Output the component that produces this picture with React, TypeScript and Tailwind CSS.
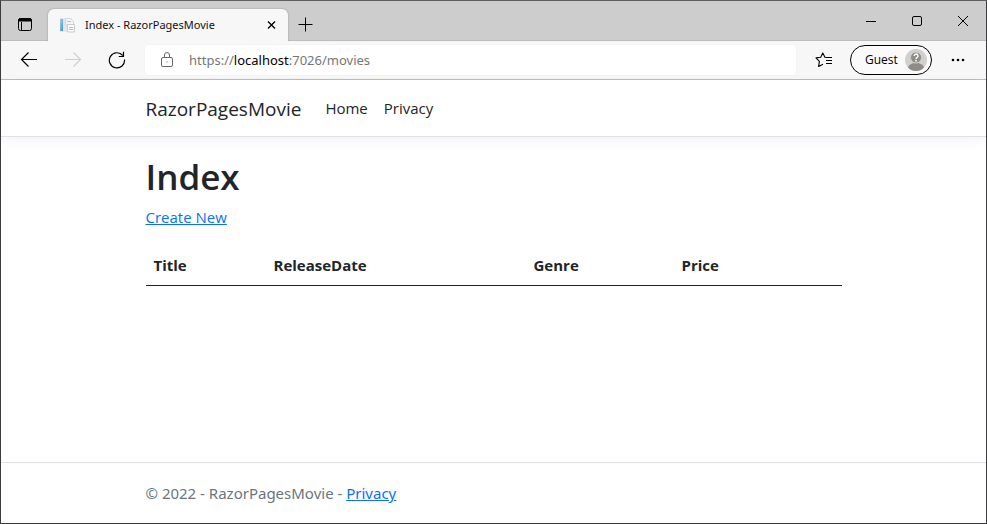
import type { ReactNode } from 'react';

function IconButton({ label, className = '', children }: { label: string; className?: string; children: ReactNode }) {
  return (
    <button type="button" aria-label={label} className={`flex shrink-0 items-center justify-center ${className}`}>
      {children}
    </button>
  );
}

function TabBar() {
  return (
    <div className="flex h-10 items-end border-b border-[#bcbcbc] bg-[#cdcdcd]">
      <IconButton label="Tab actions" className="h-8 w-[47px] text-black">
        <svg width="15" height="15" viewBox="0 0 15 15" fill="none" stroke="currentColor">
          <rect x="1.5" y="1.5" width="13" height="12" rx="2" />
          <path d="M1.5 4V3.500a2 2 0 0 1 2-2h9a2 2 0 0 1 2 2V4z" fill="currentColor" />
          <path d="M4.500 5v8.500" />
        </svg>
      </IconButton>
      <div className="-mb-px flex h-8 w-60 items-center rounded-t-md bg-[#f7f7f7] px-2 shadow-[0_0_2px_rgba(0,0,0,0.3)] [clip-path:inset(-4px_-4px_0_-4px)]">
        <svg width="20" height="16" viewBox="0 0 20 16" className="shrink-0">
          <defs>
            <linearGradient id="spine" x1="0" y1="0" x2="1" y2="1">
              <stop offset="0" stopColor="#a5d3f0" />
              <stop offset="1" stopColor="#4292c8" />
            </linearGradient>
          </defs>
          <path d="M4 1h12v14H4z" fill="#e3e5e8" />
          <path d="M4 2h3v12H4z" fill="url(#spine)" />
          <path d="M9.500 1.500h5l3 3V8h-8z" fill="#f4f5f6" stroke="#d3d6da" />
          <path d="M11.500 7.500h7V15h-7z" fill="#fafafa" stroke="#c9cdd2" />
          <path d="M11 4.500h4M13 10.500h4M13 12.500h4" stroke="#b8bfc9" />
        </svg>
        <span className="ml-[9px] flex-1 truncate font-['Noto_Sans',sans-serif] text-[11px] leading-4 text-[#111]">
          Index - RazorPagesMovie
        </span>
        <IconButton label="Close tab" className="size-4 text-black">
          <svg width="10" height="10" viewBox="0 0 10 10" fill="none" stroke="currentColor" strokeWidth="1.3">
            <path d="M1 1.500l7 7M8 1.500l-7 7" />
          </svg>
        </IconButton>
      </div>
      <IconButton label="New tab" className="h-8 w-[35px] text-black">
        <svg width="15" height="15" viewBox="0 0 15 15" fill="none" stroke="currentColor">
          <path d="M7.500 0.500v14M0.500 7.500h14" />
        </svg>
      </IconButton>
      <div className="ml-auto flex h-full items-center text-black">
        <IconButton label="Minimize" className="h-full w-[46px]">
          <svg width="10" height="10" viewBox="0 0 10 10" fill="none" stroke="currentColor">
            <path d="M0 5.500h10" />
          </svg>
        </IconButton>
        <IconButton label="Maximize" className="h-full w-[46px]">
          <svg width="10" height="10" viewBox="0 0 10 10" fill="none" stroke="currentColor">
            <rect x="0.500" y="0.500" width="9" height="9" rx="1.500" />
          </svg>
        </IconButton>
        <IconButton label="Close window" className="h-full w-[46px]">
          <svg width="10" height="10" viewBox="0 0 10 10" fill="none" stroke="currentColor">
            <path d="M0 0l10 10M10 0L0 10" />
          </svg>
        </IconButton>
      </div>
    </div>
  );
}

function Toolbar() {
  return (
    <div className="flex h-[39px] items-center border-b border-[#bdbdbd] bg-[#f7f7f7] px-1.5 text-black">
      <IconButton label="Back" className="h-8 w-11">
        <svg width="18" height="16" viewBox="0 0 18 16" fill="none" stroke="currentColor" strokeWidth="1.2">
          <path d="M17 7.500H1.500M8.500 0.500L1.500 7.500l7 7" />
        </svg>
      </IconButton>
      <IconButton label="Forward" className="h-8 w-11 text-[#cfcfcf]">
        <svg width="18" height="16" viewBox="0 0 18 16" fill="none" stroke="currentColor" strokeWidth="1.2">
          <path d="M1 7.500h15.500M9.500 0.500l7 7-7 7" />
        </svg>
      </IconButton>
      <IconButton label="Refresh" className="h-8 w-11">
        <svg width="18" height="18" viewBox="0 0 18 18" fill="none" stroke="currentColor" strokeWidth="1.2">
          <path d="M16.500 8.500A7.600 7.600 0 1 1 14.800 4.500" />
          <path d="M15.500 0.800v4.700h-4.700" />
        </svg>
      </IconButton>
      <div className="ml-1.5 flex h-[30px] flex-1 items-center rounded bg-white px-[15px] shadow-[0_0_2px_rgba(0,0,0,0.06)]">
        <svg width="14" height="16" viewBox="0 0 14 16" fill="none" stroke="#666" className="shrink-0">
          <rect x="1.500" y="5.500" width="11" height="9" rx="1.500" />
          <path d="M4.500 5.500V3a2.500 2.500 0 0 1 5 0v2.500" />
          <rect x="6.500" y="9.500" width="1" height="1" fill="#666" stroke="none" />
        </svg>
        <a
          href="https://localhost:7026/movies"
          className="ml-[15px] font-['Noto_Sans',sans-serif] text-[13px] leading-5 text-[#767676]"
        >
          https://<span className="text-black">localhost</span>:7026/movies
        </a>
      </div>
      <IconButton label="Favorites" className="ml-1.5 h-8 w-11">
        <svg width="18" height="16" viewBox="0 0 18 16" fill="none" stroke="currentColor" strokeWidth="1.100">
          <path d="M12 5.500L9.900 5.200 7.800 1 5.700 5.200 1 5.900l3.400 3.400-0.800 5.200L8 12.300" strokeLinejoin="round" />
          <path d="M11 5.500h6M11 8.500h6M11 11.500h6" />
        </svg>
      </IconButton>
      <button type="button" className="ml-1 flex h-[30px] w-[82px] shrink-0 items-center justify-between rounded-full border border-black bg-[#fafafa] pr-1 pl-3.5 text-xs">
        Guest
        <svg width="22" height="22" viewBox="0 0 22 22">
          <defs>
            <clipPath id="avatar">
              <circle cx="11" cy="11" r="11" />
            </clipPath>
          </defs>
          <g clipPath="url(#avatar)">
            <rect width="22" height="22" fill="#d2d0ce" />
            <ellipse cx="11" cy="19" rx="8" ry="5" fill="#8f8b87" />
            <circle cx="11" cy="8.500" r="5.500" fill="#8f8b87" stroke="#d2d0ce" />
          </g>
          <path d="M9.200 7a1.900 1.900 0 1 1 2.700 1.700c-.7.300-.9.600-.9 1.200" fill="none" stroke="#fff" strokeWidth="1.400" />
          <circle cx="11" cy="11.700" r="0.900" fill="#fff" />
        </svg>
      </button>
      <IconButton label="Settings and more" className="ml-1 h-8 w-11">
        <svg width="14" height="4" viewBox="0 0 14 4" fill="currentColor">
          <circle cx="2" cy="2" r="1.300" />
          <circle cx="7" cy="2" r="1.300" />
          <circle cx="12" cy="2" r="1.300" />
        </svg>
      </IconButton>
    </div>
  );
}

const container = 'mx-auto w-full max-w-[720px] px-3';
const link = 'text-[#0d6efd] underline';

export default function App() {
  return (
    <div className="flex min-h-screen flex-col border border-[#3a3a3f] border-t-[#5f5f5f] bg-white font-['Open_Sans','Noto_Sans',sans-serif] text-[15px] leading-6 text-[#212529]">
      <TabBar />
      <Toolbar />
      <header className="border-b border-[#dee2e6] shadow-[0_4px_12px_rgba(0,0,0,0.05)]">
        <nav className={`${container} flex h-14 items-center`}>
          <a href="#home" className="mr-4 pt-0.5 text-[19px] leading-8">RazorPagesMovie</a>
          <a href="#home" className="px-2">Home</a>
          <a href="#privacy" className="px-2">Privacy</a>
        </nav>
      </header>
      <main className={`${container} flex-1 pt-4`}>
        <h1 className="mb-1 text-[35px] leading-[48px] font-semibold">Index</h1>
        <p className="mb-4">
          <a href="#create" className={link}>Create New</a>
        </p>
        <table className="w-full table-fixed text-left">
          <thead>
            <tr className="border-b border-[#212529]">
              <th className="w-[120px] p-2 font-bold">Title</th>
              <th className="w-[260px] p-2 font-bold">ReleaseDate</th>
              <th className="w-[148px] p-2 font-bold">Genre</th>
              <th className="p-2 font-bold">Price</th>
            </tr>
          </thead>
        </table>
      </main>
      <footer className="border-t border-[#dee2e6] text-[#6c757d]">
        <div className={`${container} font-['Noto_Sans',sans-serif] leading-[60px]`}>
          © 2022 - RazorPagesMovie - <a href="#privacy" className={link}>Privacy</a>
        </div>
      </footer>
    </div>
  );
}
